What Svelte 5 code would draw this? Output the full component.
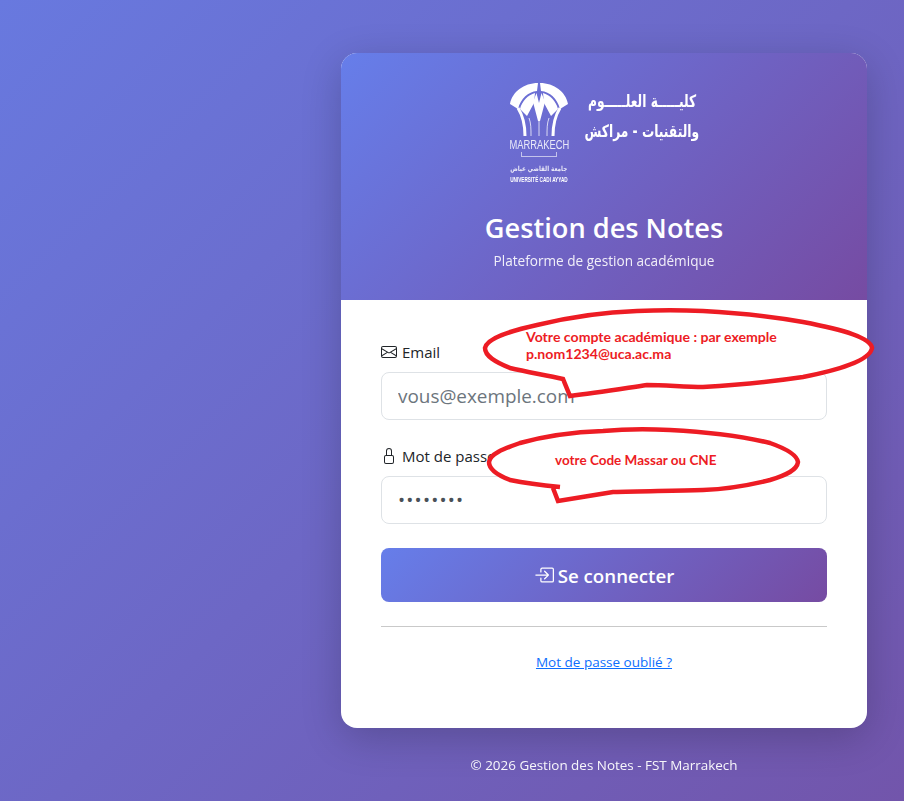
<script>
  const year = 2026;
</script>

<div class="page">
  <main class="card">
    <header class="head">
      <div class="logo">
        <div class="emblem">
          <svg class="fan" viewBox="0 0 60 54" width="60" height="54" aria-hidden="true">
            <path class="solid" d="M1 21C3 9 15 0 29 0L28 8C19 9 12 15 9 26ZM59 21C57 9 45 0 31 0L32 8C41 9 48 15 51 26Z"/>
            <path class="solid" d="M11 26C13 18 19 12 26 10L25 20 18 33ZM49 26C47 18 41 12 34 10L35 20 42 33Z"/>
            <path class="solid" d="M27.500 10 30 20 32.500 10 36 19 31 38H29L24 19Z"/>
            <path class="stem" d="M9 25C14 33 16 42 16 53M51 25C46 33 44 42 44 53"/>
            <path class="thin" d="M20 35C22 40 22 46 22 53M40 35C38 40 38 46 38 53M30 38V53"/>
          </svg>
          <span class="city">MARRAKECH</span>
          <span class="rule"></span>
          <span class="ar-small" lang="ar" dir="rtl">جامعة القاضي عياض</span>
          <span class="uni">UNIVERSITÉ CADI AYYAD</span>
        </div>
        <div class="faculty" lang="ar" dir="rtl">
          <span class="l1">كليـــــة العلـــــوم</span>
          <span class="l2">والتقنيات - مراكش</span>
        </div>
      </div>
      <h1>Gestion des Notes</h1>
      <p>Plateforme de gestion académique</p>
    </header>

    <form class="body" onsubmit={(e) => e.preventDefault()}>
      <label class="label" for="email">
        <svg viewBox="0 0 16 16" width="16" height="16" aria-hidden="true"><path d="M0 4a2 2 0 0 1 2-2h12a2 2 0 0 1 2 2v8a2 2 0 0 1-2 2H2a2 2 0 0 1-2-2V4Zm2-1a1 1 0 0 0-1 1v.217l7 4.2 7-4.2V4a1 1 0 0 0-1-1H2Zm13 2.383-4.708 2.825L15 11.105V5.383Zm-.034 6.876-5.64-3.471L8 9.583l-1.326-.795-5.64 3.470A1 1 0 0 0 2 13h12a1 1 0 0 0 .966-.741ZM1 11.105l4.708-2.897L1 5.383v5.722Z"/></svg>
        Email
      </label>
      <input id="email" class="field" type="email" placeholder="vous@exemple.com" />

      <label class="label second" for="pass">
        <svg viewBox="0 0 16 16" width="16" height="16" aria-hidden="true"><path d="M8 1a2 2 0 0 1 2 2v4H6V3a2 2 0 0 1 2-2zm3 6V3a3 3 0 0 0-6 0v4a2 2 0 0 0-2 2v5a2 2 0 0 0 2 2h6a2 2 0 0 0 2-2V9a2 2 0 0 0-2-2zM5 8h6a1 1 0 0 1 1 1v5a1 1 0 0 1-1 1H5a1 1 0 0 1-1-1V9a1 1 0 0 1 1-1z"/></svg>
        Mot de passe
      </label>
      <input id="pass" class="field pass" type="password" value="12345678" />

      <button class="submit" type="submit">
        <svg viewBox="0 0 16 16" width="20" height="20" aria-hidden="true"><path fill-rule="evenodd" d="M10 3.500a.5.5 0 0 0-.5-.5h-8a.5.5 0 0 0-.5.5v9a.5.5 0 0 0 .5.5h8a.5.5 0 0 0 .5-.5v-2a.5.5 0 0 1 1 0v2A1.500 1.500 0 0 1 9.500 14h-8A1.500 1.500 0 0 1 0 12.500v-9A1.500 1.500 0 0 1 1.500 2h8A1.500 1.500 0 0 1 11 3.500v2a.5.5 0 0 1-1 0v-2z" transform="translate(16 0) scale(-1 1)"/><path fill-rule="evenodd" d="M11.854 8.354a.5.5 0 0 0 0-.708l-3-3a.5.5 0 1 0-.708.708L10.293 7.500H1.500a.5.5 0 0 0 0 1h8.793l-2.147 2.146a.5.5 0 0 0 .708.708l3-3z"/></svg>
        Se connecter
      </button>

      <hr />
      <a class="forgot" href="#forgot">Mot de passe oublié ?</a>
    </form>
  </main>

  <footer class="foot">© {year} Gestion des Notes - FST Marrakech</footer>

  <div class="notes">
    <svg viewBox="0 0 904 801" width="904" height="801" aria-hidden="true">
      <path class="bubble" d="M563 379C545 375 527 372 510 368C495 362 485 356 485 348C487 338 510 331 537 325C570 317 605 312 637 311C660 310 680 310 703 311C740 313 775 317 803 322C845 330 871 338 872 348C870 360 840 370 803 377C770 382 735 385 703 387C685 387 665 385 647 385C620 389 595 393 570 396Z"/>
      <path class="bubble" d="M560 487C540 485 525 483 510 480C497 475 489 469 489 462C490 454 503 449 520 443C545 436 575 432 603 431C625 429 648 429 670 430C710 432 745 437 770 443C787 449 797 455 798 462C797 470 787 475 770 480C750 485 728 489 703 490C672 491 640 491 613 492C595 495 576 498 558 501L553 488"/>
    </svg>
    <span class="note n1">Votre compte académique : par exemple<br />p.nom1234@uca.ac.ma</span>
    <span class="note n2">votre Code Massar ou CNE</span>
  </div>
</div>

<style>
  :global(body) {
    margin: 0;
  }

  .page {
    position: relative;
    box-sizing: border-box;
    width: 904px;
    height: 801px;
    padding: 53px 37px 0 341px;
    overflow: hidden;
    background: linear-gradient(135deg, #6879df 0%, #7255ab 100%);
    font-family: "Open Sans", "Noto Sans", sans-serif;
    color: #212529;
  }

  .card {
    height: 675px;
    border-radius: 16px;
    overflow: hidden;
    background: #fff;
    box-shadow: 0 10px 40px rgba(0, 0, 0, 0.2);
  }

  .head {
    box-sizing: border-box;
    height: 247px;
    padding-top: 30px;
    text-align: center;
    color: #fff;
    background: linear-gradient(135deg, #667eea 0%, #764ba2 100%);
  }

  .logo {
    display: flex;
    justify-content: center;
    gap: 16px;
    height: 118px;
  }

  .emblem {
    display: flex;
    flex-direction: column;
    align-items: center;
    width: 60px;
    color: #fff;
    filter: blur(0.3px);
  }

  .fan {
    display: block;
    flex: none;
  }

  .solid {
    fill: #fff;
  }

  .stem {
    fill: none;
    stroke: #fff;
    stroke-width: 3;
  }

  .thin {
    fill: none;
    stroke: #fff;
    stroke-width: 1;
    opacity: 0.75;
  }

  .city {
    font-size: 12px;
    line-height: 14px;
    margin-top: 1px;
    font-family: "Liberation Sans", sans-serif;
    transform: scaleX(0.78);
    white-space: nowrap;
    opacity: 0.85;
  }

  .rule {
    display: block;
    flex: none;
    width: 34px;
    height: 4px;
    border: 1px solid rgba(255, 255, 255, 0.6);
    border-top: 0;
  }

  .ar-small {
    margin-top: 7px;
    font-family: "DejaVu Sans", sans-serif;
    font-size: 7px;
    font-weight: 700;
    line-height: 10px;
    white-space: nowrap;
    transform: scaleX(0.8);
    opacity: 0.85;
  }

  .uni {
    margin-top: 2px;
    font-family: "Liberation Sans", sans-serif;
    font-size: 6.500px;
    font-weight: 700;
    line-height: 8px;
    white-space: nowrap;
    transform: scaleX(0.72);
  }

  .faculty {
    display: flex;
    flex-direction: column;
    align-items: flex-start;
    width: 114px;
    padding-top: 3px;
    font-family: "DejaVu Sans", sans-serif;
    font-weight: 700;
    font-size: 17px;
    line-height: 30px;
    white-space: nowrap;
  }

  .faculty span {
    display: block;
    transform-origin: right center;
    transform: scaleX(0.72);
  }

  .l1 {
    padding-right: 4px;
  }

  h1 {
    margin: 0;
    font-size: 27.200px;
    font-weight: 600;
    line-height: 36px;
    margin-top: 9px;
  }

  .head p {
    margin: 5px 0 0;
    font-size: 13.600px;
    line-height: 20px;
    opacity: 0.9;
  }

  .body {
    display: flex;
    flex-direction: column;
    padding: 40px 40px 0;
  }

  .label {
    display: flex;
    align-items: center;
    gap: 5px;
    height: 24px;
    margin-bottom: 8px;
    font-size: 15px;
  }

  .label svg {
    fill: currentColor;
  }

  .second {
    margin-top: 24px;
  }

  .field {
    box-sizing: border-box;
    width: 100%;
    height: 48px;
    padding: 8px 16px;
    border: 1px solid #dee2e6;
    border-radius: 8px;
    background: #fff;
    font: inherit;
    font-size: 18.900px;
    color: #495057;
    outline: none;
  }

  .pass {
    letter-spacing: 1.200px;
  }

  .field::placeholder {
    color: #6c757d;
    opacity: 1;
  }

  .submit {
    display: flex;
    align-items: center;
    justify-content: center;
    gap: 4px;
    height: 54px;
    margin-top: 24px;
    padding: 0;
    border: 0;
    border-radius: 8px;
    color: #fff;
    background: linear-gradient(135deg, #667eea 0%, #764ba2 100%);
    font: inherit;
    font-size: 18.700px;
    font-weight: 600;
  }

  .submit svg {
    fill: currentColor;
  }

  hr {
    width: 100%;
    margin: 24px 0 0;
    border: 0;
    border-top: 1px solid #c9c9c9;
  }

  .forgot {
    align-self: center;
    margin-top: 25px;
    font-size: 13.500px;
    line-height: 21px;
    color: #0d6efd;
  }

  .foot {
    margin-top: 27px;
    text-align: center;
    font-size: 13.450px;
    line-height: 20px;
    color: #fff;
    opacity: 0.95;
  }

  .notes {
    position: absolute;
    inset: 0;
    pointer-events: none;
  }

  .notes svg {
    display: block;
  }

  .bubble {
    fill: #fff;
    stroke: #ed1c24;
    stroke-width: 4.500;
    stroke-linejoin: miter;
  }

  .note {
    position: absolute;
    font-family: Lato, "Open Sans", sans-serif;
    font-weight: 700;
    line-height: 17px;
    color: #ed1c24;
    white-space: nowrap;
  }

  .n1 {
    left: 526px;
    top: 328px;
    font-size: 14.100px;
  }

  .n2 {
    left: 555px;
    top: 452px;
    font-size: 13.500px;
  }
</style>
